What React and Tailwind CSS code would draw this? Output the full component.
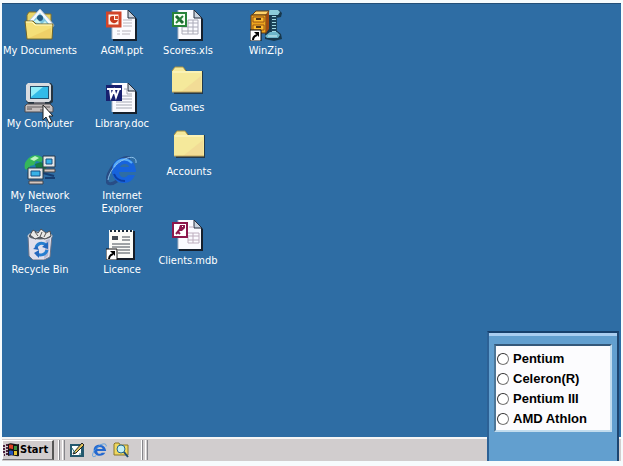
import React, { useState } from 'react';

const Svg = ({ children, className = 'w-8 h-8', box = '0 0 32 32' }) => (
  <svg viewBox={box} className={`${className} shrink-0 block`} aria-hidden="true">
    {children}
  </svg>
);

// Sheet with a folded corner, shared by all the Office files
const Sheet = () => (
  <>
    <path d="M7 2h16l8 8v22H7z" fill="#16202c" />
    <path d="M6 1h16l7 7v22H6z" fill="#fbfbff" />
    <path d="M6 1v29" stroke="#a9b4c4" />
    <path d="M22 1v8h8z" fill="#c9d2dd" stroke="#222c3a" strokeWidth="1" />
  </>
);

const PptIcon = () => (
  <Svg>
    <Sheet />
    <path d="M17 11h9M17 14h9M17 17h9M11 22h3M16 22h9M11 25h3M16 25h8" stroke="#b9b4bd" />
    <rect x="1" y="4" width="13" height="13" fill="#fff4ec" stroke="#d2452a" strokeWidth="3" />
    <path d="M4 9a4 4 0 1 0 8 2H8V7C6 7 4 7 4 9z" fill="#c8391d" />
    <path d="M9 7h3v3H9z" fill="#d9512f" />
  </Svg>
);

const DocIcon = () => (
  <Svg>
    <Sheet />
    <path d="M18 7h3v5h5M16 14h10M16 17h10M10 20h16M10 23h16M10 26h16" stroke="#a5a9b4" fill="none" />
    <rect x="0" y="3" width="16" height="16" fill="#17206f" />
    <path d="M1 7h5M6 7h5M11 7h4M4 7l1 8 3-7 2 7 3-8" stroke="#fff" strokeWidth="2" fill="none" />
  </Svg>
);

const XlsIcon = () => (
  <Svg>
    <Sheet />
    <path d="M16 11h10v14H10v-7M10 22h16M10 18h16M16 14h10M16 11v14M21 11v14" stroke="#aaaab8" fill="none" />
    <rect x="1" y="4" width="13" height="13" fill="#f4fff2" stroke="#27833a" strokeWidth="2" />
    <path d="M4 7l7 7" stroke="#1d6c31" strokeWidth="3" />
    <path d="M11 7l-7 7" stroke="#27833a" strokeWidth="2" />
  </Svg>
);

const MdbIcon = () => (
  <Svg>
    <Sheet />
    <path d="M17 8h5M16 14h11v10H16v-6M16 17h11M16 21h11M21 14v10" stroke="#bdaebe" fill="none" />
    <rect x="1" y="4" width="14" height="14" fill="#fff" stroke="#8c174c" strokeWidth="2" />
    <path d="M8 6h5v3l-3 3H7V9z" fill="#8c174c" />
    <path d="M9 9l-5 6M6 13l2 2" stroke="#8c174c" strokeWidth="2" />
    <path d="M10 7h1v1h-1z" fill="#fff" />
  </Svg>
);

const FolderIcon = () => (
  <Svg>
    <path d="M3 5l2-3h8l3 3h16v23H3z" fill="#24394a" />
    <path d="M1 5l3-4h8l3 4h16v21H1z" fill="#f5e99b" />
    <path d="M1 5l3-4h8l3 4" stroke="#a59145" fill="none" />
    <path d="M2 6h28" stroke="#fffbd0" />
    <path d="M30 10v16H10z" fill="#f0d393" opacity=".6" />
    <path d="M1 26h30" stroke="#c7a95b" />
  </Svg>
);

const DocumentsIcon = () => (
  <Svg>
    <path d="M3 6l2-3h7l2 2h13v10H3z" fill="#e7d468" stroke="#82722d" />
    <path d="M4 13L16 0l14 16-3 5H8z" fill="#f4faff" stroke="#b7c6d4" />
    <path d="M9 12l7-8 9 11-3 4H12z" fill="#7ec6e2" />
    <circle cx="16" cy="9" r="3" fill="#235b82" />
    <path d="M9 13l4-3 5 5 3-3 3 4z" fill="#c9f4ef" />
    <path d="M1 12h8l3 3h17l-1 15H3z" fill="#f4df78" stroke="#6d642c" />
    <path d="M2 13h6l3 3h17" stroke="#fffbc6" fill="none" />
    <path d="M5 29l22-10v10z" fill="#e9c75d" opacity=".6" />
  </Svg>
);

const ComputerIcon = () => (
  <Svg>
    <path d="M2 3l3-2h22l2 3v16l-3 2H5l-3-3z" fill="#253441" />
    <path d="M2 3l2-2h21l2 2v15l-2 2H4l-2-2z" fill="#d9dce0" />
    <path d="M6 4h19v13H6z" fill="#22506e" />
    <path d="M7 5h17v11H7z" fill="#33bbe8" />
    <path d="M7 5h12L7 15z" fill="#90edf9" />
    <path d="M10 20h11v3H10z" fill="#77777f" />
    <path d="M3 22h23l3 3v5H1v-6z" fill="#c5bebd" stroke="#4a4b50" />
    <path d="M3 25h23M16 28h8" stroke="#615c5e" />
    <path d="M3 27h5" stroke="#8c8686" strokeWidth="2" />
  </Svg>
);

const MiniPc = ({ x, y, w }) => (
  <g transform={`translate(${x} ${y})`}>
    <path d={`M0 0h${w}v11H0z`} fill="#e2e5e7" stroke="#27394b" />
    <path d={`M3 3h${w - 6}v5H3z`} fill="#38b2e7" stroke="#164f83" />
    <path d={`M1 13h${w - 1}v3H1z`} fill="#d6c6bd" stroke="#40454c" />
  </g>
);

const NetworkIcon = () => (
  <Svg>
    <circle cx="12" cy="12" r="11" fill="#1f7fb0" />
    <path d="M3 6c4-5 11-7 17-1l-3 3-5-1-2 4-4 1-1 4-4-1C0 11 1 8 3 6z" fill="#35b659" />
    <path d="M11 10l6-2 6 5-5 7-5-2z" fill="#167d42" />
    <path d="M6 5l5-3 4 2-5 3z" fill="#bdf5c0" />
    <path d="M19 19l11 3M21 24h10" stroke="#173d71" strokeWidth="2" />
    <MiniPc x={19} y={2} w={12} />
    <MiniPc x={4} y={14} w={15} />
  </Svg>
);

const RecycleIcon = () => (
  <Svg>
    <path d="M4 8l24-1-2 22-6 3H9l-4-4z" fill="#dfdeec" stroke="#687287" />
    <path d="M22 10h4l-2 18-4 3z" fill="#b5b8d2" />
    <ellipse cx="16" cy="8" rx="12" ry="4" fill="#59616b" stroke="#e4e7ef" />
    <path d="M6 7l3-5 5 3 3-4 5 4 4-2 1 5-6 3-5-2-5 2z" fill="#e8e8e6" stroke="#4b4f56" />
    <path d="M11 4l3 4M18 4l-2 5M22 5l-2 4" stroke="#555" />
    <path d="M12 20c1-5 6-6 10-3M23 22c-1 5-7 6-10 4" stroke="#267ed0" strokeWidth="3" fill="none" />
    <path d="M24 14v7l-6-2zM15 22l-5 3 5 5zM9 21l4-3 2 4z" fill="#2467be" />
  </Svg>
);

const IeIcon = () => (
  <Svg>
    <path d="M24 4C14 1 3 15 1 25c-1 6 5 6 10 2" stroke="#284d86" strokeWidth="3" fill="none" />
    <path
      d="M30 18H13c0 6 7 7 9 3h7c-2 5-6 8-11 8A12 12 0 0 1 6 16C6 9 11 4 18 4s12 6 12 14zM14 13h9c0-4-8-4-9 0z"
      fill="#1763dc"
      fillRule="evenodd"
    />
    <path d="M8 13C11 5 20 3 26 9" stroke="#58aef8" strokeWidth="2" fill="none" />
    <path d="M8 20c2 5 6 7 11 7" stroke="#0c3fa4" strokeWidth="2" fill="none" />
    <path d="M30 9c1-6-5-7-11-4C9 9 3 19 2 26" stroke="#8fc2ea" strokeWidth="1" fill="none" />
  </Svg>
);

// Taskbar version keeps a clear counter inside the letter
const SmallIeIcon = () => (
  <Svg className="w-4 h-4" box="0 0 18 16">
    <path d="M16 11c-2 5-13 5-13-3s13-8 14 1H7c0 4 4 4 5 2zM7 7h6c0-3-6-3-6 0z" fill="#2468cf" fillRule="evenodd" />
    <path d="M17 4c1-4-5-4-10 1-4 4-6 8-5 10 1 1 3 0 4-1" stroke="#4b97e2" strokeWidth="1" fill="none" />
  </Svg>
);

const ShortcutArrow = () => (
  <g transform="translate(0 21)">
    <path d="M0 0h11v11H0z" fill="#fff" stroke="#111" />
    <path d="M3 10c0-3 1-4 4-5" stroke="#000" strokeWidth="2" fill="none" />
    <path d="M4 2h5v5z" fill="#000" />
  </g>
);

const LicenceIcon = () => (
  <Svg>
    <path d="M4 3h25v29H4z" fill="#151d28" />
    <path d="M3 2h24v28H3z" fill="#fbfbf7" />
    <path d="M4 3h24" stroke="#172837" strokeWidth="2" strokeDasharray="2 2" />
    <path d="M6 9h6M6 11h6" stroke="#424a53" strokeWidth="2" />
    <path d="M16 9h8M16 12h8M6 16h18M6 19h18M12 22h12M12 25h12" stroke="#424a53" />
    <ShortcutArrow />
  </Svg>
);

const WinZipIcon = () => (
  <Svg>
    <path d="M15 3l4-2h10l3 3-1 4-5 1v12l5 4 1 5-8 2-9-2z" fill="#17384d" />
    <path d="M16 3l4-2h8l2 2-2 3H17z" fill="#8ccbd9" />
    <path d="M21 7h6v16h-6z" fill="#1c4358" />
    <path d="M24 7v16" stroke="#9fd6e0" strokeWidth="4" strokeDasharray="1 2" />
    <path d="M15 27l5-4h7l3 3-2 3H17z" fill="#6db5ca" />
    <path d="M18 27h9" stroke="#d5f2f5" strokeWidth="1" />
    <path d="M2 6l4-4h13l-3 4z" fill="#ffd36b" stroke="#633c10" />
    <path d="M1 6h15v18H1z" fill="#eea51e" stroke="#653b10" />
    <path d="M16 6l3-4v18l-3 4z" fill="#9f4b13" />
    <path d="M3 8h11v5H3zM3 16h11v5H3z" fill="#ffbd2e" stroke="#985515" />
    <path d="M6 10h5M6 18h5" stroke="#4d351a" strokeWidth="2" />
    <ShortcutArrow />
  </Svg>
);

const PointerIcon = () => (
  <Svg className="w-3 h-5" box="0 0 12 20">
    <path d="M1 1v15l3-3 3 6 3-1-3-6h4z" fill="#fff" stroke="#222" />
  </Svg>
);

const FlagIcon = () => (
  <Svg className="w-4 h-4" box="0 0 16 16">
    <path d="M5 2c4-2 6 1 11 0v12c-4 1-6-2-11 0z" fill="#151515" />
    <path d="M6 3c2-1 3 0 4 0v4c-2 0-3-1-4 0z" fill="#d94225" />
    <path d="M11 4h3v4h-3z" fill="#39923c" />
    <path d="M6 9c2-1 3 0 4 0v4c-2 0-3-1-4 0z" fill="#2452bb" />
    <path d="M11 9h3v4h-3z" fill="#e4c22e" />
    <path d="M0 4h2M3 3h2M0 7h2M3 6h2M0 10h2M3 9h2M1 13h1M3 12h2" stroke="#4c2440" strokeWidth="2" />
  </Svg>
);

const ShowDesktopIcon = () => (
  <Svg className="w-4 h-4" box="0 0 16 16">
    <path d="M1 2h14v13H1z" fill="#24586e" />
    <path d="M3 4h9v9H3z" fill="#fff" />
    <path d="M5 10l8-9 2 2-8 8-3 1z" fill="#e3c55e" stroke="#222" />
    <path d="M3 6l3 5M10 12h3" stroke="#27727a" />
  </Svg>
);

const SearchFolderIcon = () => (
  <Svg className="w-4 h-4" box="0 0 16 16">
    <path d="M1 2l1-1h4l1 2h8v10H1z" fill="#f0d860" stroke="#88762a" />
    <circle cx="8" cy="7" r="4" fill="#c2eff6" stroke="#27678b" />
    <path d="M11 10l4 5" stroke="#1c4c72" strokeWidth="2" />
  </Svg>
);

const desktopIcons = [
  { label: 'My Documents', Icon: DocumentsIcon, place: 'left-0 top-[5px]' },
  { label: 'My Computer', Icon: ComputerIcon, place: 'left-0 top-[78px]' },
  { label: 'My Network Places', Icon: NetworkIcon, place: 'left-0 top-[150px]' },
  { label: 'Recycle Bin', Icon: RecycleIcon, place: 'left-0 top-[224px]' },
  { label: 'AGM.ppt', Icon: PptIcon, place: 'left-[82px] top-[5px]' },
  { label: 'Library.doc', Icon: DocIcon, place: 'left-[82px] top-[78px]' },
  { label: 'Internet Explorer', Icon: IeIcon, place: 'left-[82px] top-[150px]' },
  { label: 'Licence', Icon: LicenceIcon, place: 'left-[82px] top-[224px]' },
  { label: 'Scores.xls', Icon: XlsIcon, place: 'left-[148px] top-[5px]' },
  { label: 'Games', Icon: FolderIcon, place: 'left-[147px] top-[62px]' },
  { label: 'Accounts', Icon: FolderIcon, place: 'left-[149px] top-[126px]' },
  { label: 'Clients.mdb', Icon: MdbIcon, place: 'left-[148px] top-[215px]' },
  { label: 'WinZip', Icon: WinZipIcon, place: 'left-[226px] top-[5px]' },
];

const processors = ['Pentium', 'Celeron(R)', 'Pentium III', 'AMD Athlon'];

const DesktopIcon = ({ label, Icon, place }) => (
  <button
    type="button"
    className={`absolute ${place} w-[76px] flex flex-col items-center gap-[3px] text-[11px] leading-[13px] text-white font-['DejaVu_Sans_Condensed','DejaVu_Sans',sans-serif]`}
  >
    <Icon />
    <span>{label}</span>
  </button>
);

const ProcessorPanel = () => {
  const [selected, setSelected] = useState(null);

  return (
    <form className="absolute right-1 bottom-[5px] w-[132px] h-[130px] bg-[#629fcf] border-2 border-t-[#17406c] border-l-[#2c6195] border-r-[#1d4570] border-b-0 px-[5px]">
      <div className="h-[3px] -mx-[5px] mb-2 bg-[#a9cdf0]" />
      <fieldset className="h-[88px] bg-[#fcfcfe] border-2 border-t-[#34587a] border-l-[#4d7697] border-r-[#c2dcee] border-b-[#c2dcee] pt-[3px] pl-px">
        {processors.map((name) => (
          <label
            key={name}
            className="flex items-center gap-1 h-5 text-[13px] leading-5 font-bold text-black font-['Liberation_Sans',Arial,sans-serif]"
          >
            <input
              type="radio"
              name="processor"
              value={name}
              checked={selected === name}
              onChange={() => setSelected(name)}
              className="appearance-none w-3 h-3 rounded-full bg-white border border-t-[#333] border-l-[#333] border-r-[#777] border-b-[#777] checked:bg-black"
            />
            {name}
          </label>
        ))}
      </fieldset>
    </form>
  );
};

const Grip = () => (
  <div className="flex gap-[2px] h-5">
    <div className="w-[2px] border-l border-white bg-[#85858a]" />
    <div className="w-[3px] border-l border-white border-r border-r-[#85858a]" />
  </div>
);

const Taskbar = () => (
  <footer className="flex items-center h-6 bg-[#d1cdce] border-t-2 border-[#f6f6f6]">
    <button
      type="button"
      className="flex items-center gap-px h-5 w-[52px] border border-t-white border-l-white border-r-2 border-r-[#555] border-b-[#77777a] text-[11px] font-bold text-black font-['DejaVu_Sans_Condensed','DejaVu_Sans',sans-serif]"
    >
      <FlagIcon />
      Start
    </button>
    <div className="ml-1">
      <Grip />
    </div>
    <div className="flex items-center gap-[6px] ml-1">
      <button type="button" aria-label="Show Desktop"><ShowDesktopIcon /></button>
      <button type="button" aria-label="Internet Explorer"><SmallIeIcon /></button>
      <button type="button" aria-label="Search"><SearchFolderIcon /></button>
    </div>
    <div className="ml-3">
      <Grip />
    </div>
  </footer>
);

export default function App() {
  return (
    <div className="relative flex flex-col min-h-screen bg-[#f6fbfd] pt-[3px] pb-[5px] px-[2px]">
      <main className="relative flex-1 bg-[#2e6da4] border-t border-[#234f78]">
        {desktopIcons.map((item) => (
          <DesktopIcon key={item.label} {...item} />
        ))}
        <div className="absolute left-10 top-[100px] pointer-events-none">
          <PointerIcon />
        </div>
      </main>
      <Taskbar />
      <ProcessorPanel />
    </div>
  );
}
